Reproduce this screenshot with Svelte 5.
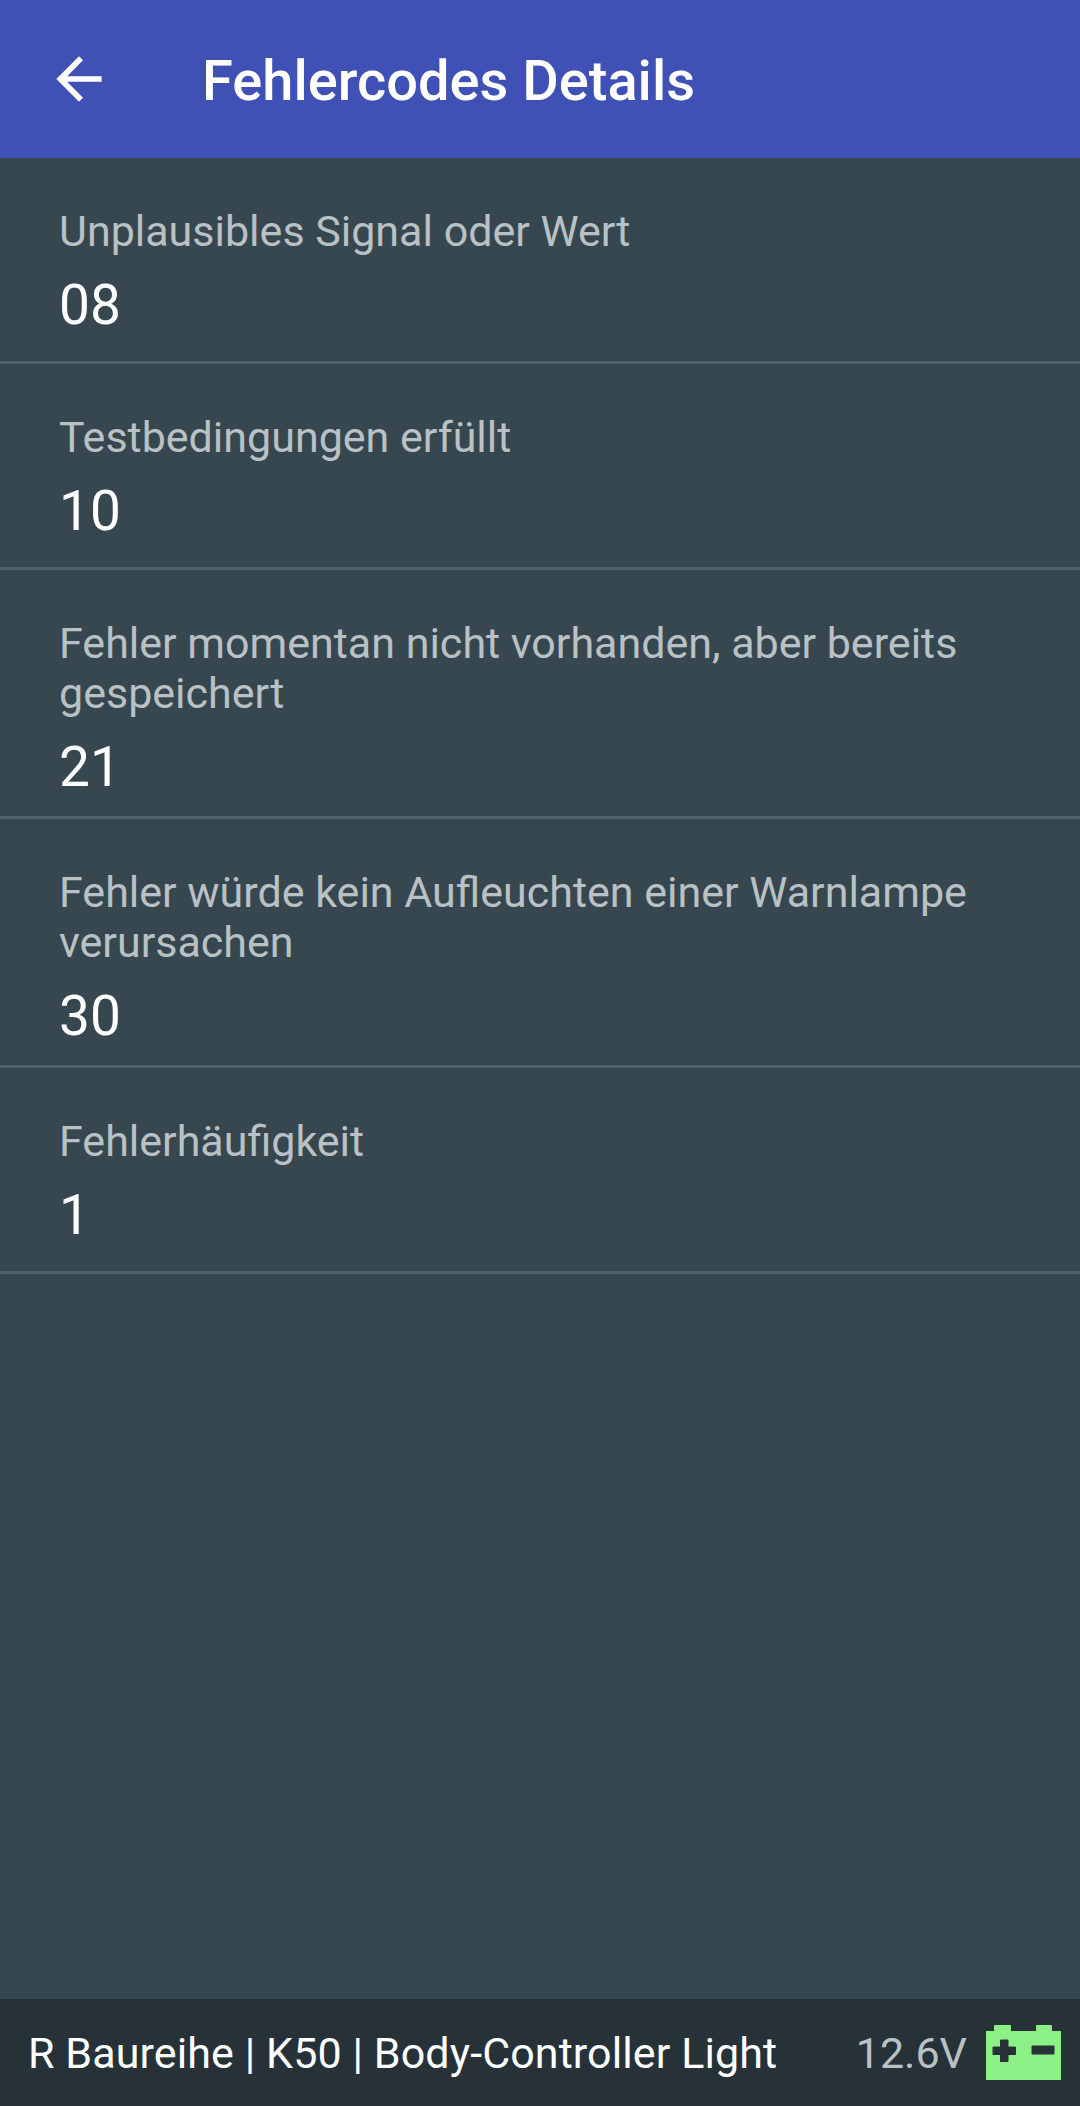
<script>
  const rows = [
    { label: "Unplausibles Signal oder Wert", value: "08" },
    { label: "Testbedingungen erfüllt", value: "10" },
    { label: "Fehler momentan nicht vorhanden, aber bereits gespeichert", value: "21" },
    { label: "Fehler würde kein Aufleuchten einer Warnlampe verursachen", value: "30" },
    { label: "Fehlerhäufigkeit", value: "1" }
  ];
</script>

<div class="screen">
  <header class="toolbar">
    <button class="back" aria-label="Zurück">
      <svg viewBox="0 0 24 24" width="68" height="68">
        <path d="M20 11H7.83l5.59-5.59L12 4l-8 8 8 8 1.41-1.41L7.83 13H20v-2z" fill="#fff" />
      </svg>
    </button>
    <h1>Fehlercodes Details</h1>
  </header>

  <main class="list">
    {#each rows as row}
      <div class="row">
        <div class="label">{row.label}</div>
        <div class="value">{row.value}</div>
      </div>
    {/each}
  </main>

  <footer class="status">
    <span class="device">R Baureihe | K50 | Body-Controller Light</span>
    <span class="volt">12.6V</span>
    <svg class="battery" viewBox="0 0 75 55" width="75" height="55">
      <path d="M0 6h8V1a1 1 0 0 1 1-1h15a1 1 0 0 1 1 1v5h25V1a1 1 0 0 1 1-1h14a1 1 0 0 1 1 1v5h9v49H0z" fill="#8bf085" />
      <path d="M7 22h7.500v-7h7.500v7h7.500v7.500h-7.500v7h-7.500v-7H7zM46 21h22v8H46z" fill="#263238" stroke="#263238" stroke-linejoin="round" />
    </svg>
  </footer>
</div>

<style>
  :global(body) {
    margin: 0;
  }
  .screen {
    display: flex;
    flex-direction: column;
    width: 1080px;
    height: 2106px;
    background: #37474f;
    font-family: Roboto, "Liberation Sans", sans-serif;
  }
  .toolbar {
    display: flex;
    align-items: center;
    height: 158px;
    padding-left: 45px;
    background: #3f51b5;
    color: #fff;
    box-sizing: border-box;
  }
  .back {
    display: flex;
    width: 68px;
    height: 68px;
    padding: 0;
    border: none;
    background: none;
  }
  h1 {
    margin: 4px 0 0 89px;
    font-size: 56px;
    font-weight: 500;
    line-height: 1;
  }
  .list {
    flex: 1;
  }
  .row {
    min-height: 206px;
    padding: 48px 59px 12px;
    border-bottom: 3px solid #4f636c;
    box-sizing: border-box;
  }
  .label {
    font-size: 43px;
    line-height: 50px;
    color: #b9c1c5;
  }
  .value {
    margin-top: 12px;
    font-size: 55px;
    line-height: 74px;
    color: #fff;
  }
  .status {
    display: flex;
    align-items: center;
    height: 107px;
    padding: 0 19px 0 28px;
    background: #263238;
    box-sizing: border-box;
  }
  .device {
    flex: 1;
    font-size: 43px;
    letter-spacing: 0.1px;
    color: #fff;
  }
  .volt {
    margin-right: 19px;
    font-size: 43px;
    color: #b9c1c5;
  }
</style>
